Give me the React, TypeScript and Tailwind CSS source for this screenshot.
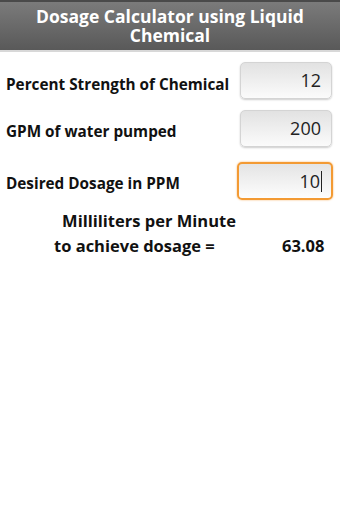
import React from "react";

const font = { fontFamily: '"Open Sans", "Noto Sans", sans-serif' };

function Box({ value, focused }: { value: string; focused?: boolean }) {
  if (focused) {
    return (
      <div className="w-[96px] h-[38px] rounded-[5px] border-2 border-[#f39a33] bg-gradient-to-b from-[#e4e4e4] to-[#fdfdfd] flex items-center justify-end pr-[9px] text-[18px] font-normal text-[#222] shadow-[0_0_2px_#f6b060]">
        <span>{value}</span>
        <span className="w-[1px] h-[21px] bg-[#222] ml-[1px]" />
      </div>
    );
  }
  return (
    <div className="w-[92px] h-[37px] rounded-[5px] border border-[#d4d4d4] bg-gradient-to-b from-[#e2e2e2] to-[#fbfbfb] flex items-center justify-end pr-[10px] text-[18px] font-normal text-[#222] shadow-[0_1px_2px_rgba(0,0,0,0.2)]">
      {value}
    </div>
  );
}

export default function App() {
  return (
    <div className="w-[340px] h-[510px] bg-white flex flex-col" style={font}>
      <div className="h-[50px] bg-gradient-to-b from-[#7b7b7b] to-[#595959] border-t-2 border-[#4a4a4a] flex items-center justify-center text-center text-white font-bold text-[17.5px] leading-[19px] px-1 pb-[1px]">
        <div>
          Dosage Calculator using Liquid
          <br />
          Chemical
        </div>
      </div>
      <div className="h-[2px] bg-[#d8d8d8]" />
      <div className="flex flex-col pl-[6px] pr-[7px] text-[15.3px] font-bold text-[#111]">
        <div className="flex items-center justify-between mt-[10px]">
          <span className="pt-[7px]">Percent Strength of Chemical</span>
          <div className="mr-[1px]"><Box value="12" /></div>
        </div>
        <div className="flex items-center justify-between mt-[11px]">
          <span className="pt-[6px]">GPM of water pumped</span>
          <div className="mr-[1px]"><Box value="200" /></div>
        </div>
        <div className="flex items-center justify-between mt-[15px]">
          <span className="pt-[4px]">Desired Dosage in PPM</span>
          <Box value="10" focused />
        </div>
      </div>
      <div className="text-[16.5px] font-bold text-[#111] mt-[8px]">
        <div className="text-center w-[298px] h-[25px] leading-[25px]">Milliliters per Minute</div>
        <div className="flex h-[25px] leading-[25px]">
          <span className="ml-[54px] w-[228px]">to achieve dosage =</span>
          <span>63.08</span>
        </div>
      </div>
    </div>
  );
}
